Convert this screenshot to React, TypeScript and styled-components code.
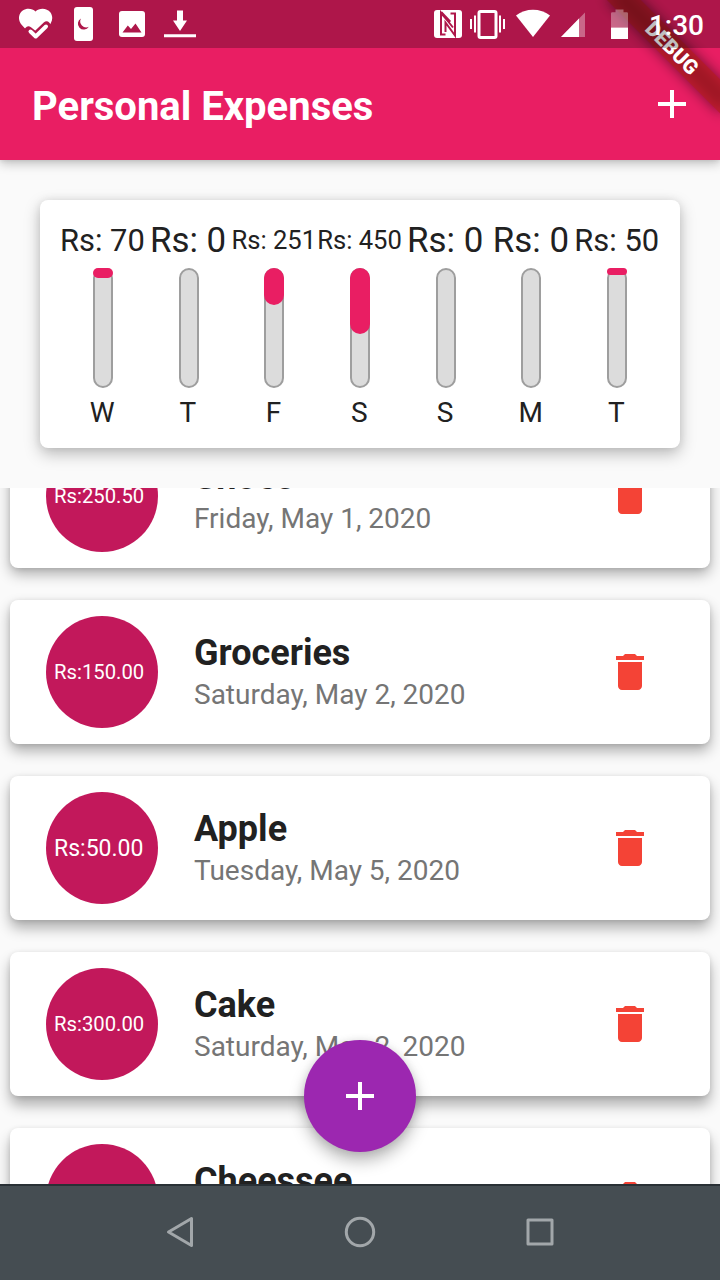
import React from 'react';
import styled, { createGlobalStyle } from 'styled-components';

const GlobalStyle = createGlobalStyle`
  * { box-sizing: border-box; }
  body { margin: 0; background: #fafafa; }
`;

const Screen = styled.div`
  position: relative;
  display: flex;
  flex-direction: column;
  width: 720px;
  height: 1280px;
  overflow: hidden;
  background: #fafafa;
  color: #212121;
  font-family: Roboto, 'Liberation Sans', sans-serif;
`;

const StatusBar = styled.div`
  position: absolute;
  inset: 0 0 auto 0;
  z-index: 3;
  display: flex;
  justify-content: space-between;
  height: 48px;
  padding: 0 16px 0 18px;
  background: rgba(0, 0, 0, 0.25);
  color: #fff;
`;

const StatusGroup = styled.div`
  display: flex;
  align-items: center;
`;

const StatusIcon = styled.span<{ $before?: number }>`
  display: flex;
  margin-left: ${({ $before = 0 }) => $before}px;
`;

const Clock = styled.span`
  margin-left: 21px;
  padding-top: 3px;
  font-size: 28px;
  font-weight: 500;
  line-height: 46px;
`;

const AppBar = styled.header`
  position: relative;
  z-index: 1;
  display: flex;
  flex: none;
  align-items: center;
  justify-content: space-between;
  height: 160px;
  padding: 48px 24px 0 32px;
  background: #e91e63;
  box-shadow: 0 4px 10px rgba(0, 0, 0, 0.22), 0 1px 4px rgba(0, 0, 0, 0.08);
`;

const AppTitle = styled.h1`
  margin: 0;
  padding-top: 4px;
  color: #fff;
  font-size: 40px;
  font-weight: 700;
  line-height: 47px;
`;

const IconButton = styled.button`
  display: flex;
  padding: 0;
  border: 0;
  background: none;
  color: inherit;
`;

const DebugBanner = styled.div`
  position: absolute;
  top: 56px;
  left: 640px;
  z-index: 2;
  width: 160px;
  height: 24px;
  transform: rotate(45deg);
  transform-origin: 80px -56px;
  color: #fff;
  font-size: 20.4px;
  font-weight: 900;
  line-height: 24px;
  text-align: center;

  &::before,
  &::after {
    content: '';
    position: absolute;
    inset: 0;
    z-index: -1;
  }

  &::before {
    background: rgba(0, 0, 0, 0.5);
    filter: blur(7px);
  }

  &::after {
    background: rgba(183, 28, 28, 0.63);
  }
`;

const ChartCard = styled.section`
  display: flex;
  flex: none;
  height: 248px;
  margin: 40px;
  padding: 20px;
  border-radius: 8px;
  background: #fff;
  box-shadow: 0 6px 16px rgba(0, 0, 0, 0.25), 0 0 8px rgba(0, 0, 0, 0.08);
`;

const ChartColumn = styled.div`
  display: flex;
  flex: 1 1 0;
  flex-direction: column;
  align-items: center;
  gap: 8px;
  min-width: 0;
`;

const Amount = styled.div<{ $size: number }>`
  height: 40px;
  padding-right: 1px;
  font-size: ${({ $size }) => $size}px;
  line-height: 41px;
  white-space: nowrap;
`;

const Bar = styled.div`
  position: relative;
  width: 20px;
  height: 120px;
  border: 2px solid #9e9e9e;
  border-radius: 10px;
  background: #dcdcdc;
`;

const BarFill = styled.div`
  position: absolute;
  top: -2px;
  left: -2px;
  width: 20px;
  border-radius: 20px;
  background: #e91e63;
`;

const Day = styled.div`
  height: 32px;
  padding-right: 1.4px;
  font-size: 28px;
  line-height: 33px;
`;

const ListViewport = styled.main`
  flex: none;
  height: 696px;
  overflow: hidden;
`;

const TransactionList = styled.div`
  display: flex;
  flex-direction: column;
  gap: 32px;
  margin-top: -64px;
  padding: 0 10px;
`;

const TransactionCard = styled.article<{ $drop: number }>`
  display: flex;
  flex: none;
  align-items: center;
  height: 144px;
  padding: 0 56px 0 36px;
  border-radius: 8px;
  background: #fff;
  box-shadow: 0 ${({ $drop }) => $drop}px 14px rgba(0, 0, 0, 0.31), 0 1px 5px rgba(0, 0, 0, 0.1);
`;

const Avatar = styled.div<{ $size: number }>`
  display: flex;
  flex: none;
  align-items: center;
  width: 112px;
  height: 112px;
  padding-left: 8px;
  border-radius: 50%;
  background: #c2185b;
  color: #fff;
  font-size: ${({ $size }) => $size}px;
  white-space: nowrap;
`;

const Details = styled.div`
  flex: 1;
  margin-left: 36px;
  padding-top: 4px;
`;

const ItemTitle = styled.h2`
  margin: 0;
  font-size: 36px;
  font-weight: 700;
  line-height: 42px;
`;

const ItemDate = styled.p`
  margin: 0;
  color: #757575;
  font-size: 28px;
  line-height: 42px;
`;

const AddButton = styled.button`
  position: absolute;
  top: 1040px;
  left: 304px;
  display: flex;
  align-items: center;
  justify-content: center;
  width: 112px;
  height: 112px;
  padding: 0;
  border: 0;
  border-radius: 50%;
  background: #9c27b0;
  box-shadow: 0 9px 16px rgba(0, 0, 0, 0.27), 0 1px 8px rgba(0, 0, 0, 0.1);
`;

const NavBar = styled.nav`
  position: relative;
  display: flex;
  flex: none;
  align-items: center;
  justify-content: center;
  gap: 132px;
  height: 96px;
  padding-bottom: 2px;
  border-top: 2px solid #293035;
  background: #454d52;
`;

const PlusIcon = () => (
  <svg width="48" height="48" viewBox="0 0 24 24" fill="#fff">
    <path d="M19 13h-6v6h-2v-6H5v-2h6V5h2v6h6z" />
  </svg>
);

const DeleteIcon = () => (
  <svg width="48" height="48" viewBox="0 0 24 24" fill="#f44336">
    <path d="M6 19c0 1.1.9 2 2 2h8c1.1 0 2-.9 2-2V7H6v12zM19 4h-3.5l-1-1h-5l-1 1H5v2h14V4z" />
  </svg>
);

const HeartCheckIcon = () => (
  <svg width="35" height="48" viewBox="0 0 35 48">
    <path d="M17.500 11.500C13 7 3 8 1.200 16C0 22 4 26 10.500 31.500L18 38.500L28 29C35 23 35.500 17 32.500 12.500C28.500 7.500 21 8 17.500 11.500Z" fill="#fff" />
    <path d="M10.500 30.500L17.500 36L28.500 25.500" fill="none" stroke="#ae174a" strokeWidth="8" strokeLinecap="round" strokeLinejoin="round" />
    <path d="M12.500 31.500L17.700 36.500L28 26.500" fill="none" stroke="#fff" strokeWidth="4" strokeLinecap="round" strokeLinejoin="round" />
  </svg>
);

const NightPhoneIcon = () => (
  <svg width="19" height="48" viewBox="0 0 19 48">
    <rect y="7" width="19" height="34" rx="3" fill="#fff" />
    <path d="M7 18.500A6 6 0 0 0 14.800 26.800A5.900 5.900 0 1 1 7 18.500Z" fill="#ae174a" />
  </svg>
);

const ImageIcon = () => (
  <svg width="26" height="48" viewBox="0 0 26 48">
    <rect y="11" width="26" height="26" rx="3" fill="#fff" />
    <path d="M3.500 32.500L8.800 25.500L12 29L16.500 23.500L22.500 32.500Z" fill="#ae174a" />
  </svg>
);

const DownloadIcon = () => (
  <svg width="32" height="48" viewBox="0 0 32 48" fill="#fff">
    <path d="M13 10.500h6v10h4L16 31L9 20.500h4zM0 34.200h32V37.300H0z" />
  </svg>
);

const NfcIcon = () => (
  <svg width="28" height="48" viewBox="0 0 28 48">
    <rect y="10" width="28" height="28" rx="3" fill="#fff" />
    <g fill="none" stroke="#ae174a" strokeWidth="2">
      <path d="M11.500 34.500H7V12.500L19 27.500" />
      <path d="M16.500 13.500H21V35.500L11.500 22.500V32" />
      <path d="M7 12.500L16 22" strokeWidth="3" />
    </g>
  </svg>
);

const VibrateIcon = () => (
  <svg width="35" height="48" viewBox="0 0 35 48" fill="none" stroke="#fff">
    <rect x="9" y="11.500" width="17" height="26" rx="1.500" strokeWidth="3" />
    <path d="M1 19v10M5 15.500v17M30 15.500v17M34 19v10" strokeWidth="2" />
  </svg>
);

const WifiIcon = () => (
  <svg width="34" height="48" viewBox="0 0 34 48">
    <path d="M17 37L0 15.500C9.500 7.800 24.500 7.800 34 15.500Z" fill="#fff" />
  </svg>
);

const SignalIcon = () => (
  <svg width="24" height="48" viewBox="0 0 24 48" fill="#fff">
    <path d="M0 37L24 12.500V37Z" opacity=".35" />
    <path d="M0 37L18 18.600V37Z" />
  </svg>
);

const BatteryIcon = () => (
  <svg width="17" height="48" viewBox="0 0 17 48" fill="#fff">
    <path d="M0 27.500V13.500Q0 12.300 1.200 12.300H4.500V9.500H12.500V12.300H15.800Q17 12.300 17 13.500V27.500Z" opacity=".35" />
    <path d="M0 27.500H17V39H0z" />
  </svg>
);

const BackIcon = () => (
  <svg width="48" height="48" viewBox="0 0 48 48" fill="none" stroke="#a2a7aa" strokeWidth="3" strokeLinejoin="round">
    <path d="M12.500 24L35.500 10.500V37.500Z" />
  </svg>
);

const HomeIcon = () => (
  <svg width="48" height="48" viewBox="0 0 48 48" fill="none" stroke="#a2a7aa" strokeWidth="3">
    <circle cx="24" cy="24" r="13.700" />
  </svg>
);

const RecentsIcon = () => (
  <svg width="48" height="48" viewBox="0 0 48 48" fill="none" stroke="#a2a7aa" strokeWidth="3" strokeLinejoin="round">
    <rect x="12" y="12" width="24" height="24" />
  </svg>
);

const days = [
  { day: 'W', amount: 70, size: 30.9 },
  { day: 'T', amount: 0, size: 34.9 },
  { day: 'F', amount: 251, size: 25.6 },
  { day: 'S', amount: 450, size: 25.6 },
  { day: 'S', amount: 0, size: 34.9 },
  { day: 'M', amount: 0, size: 34.9 },
  { day: 'T', amount: 50, size: 30.9 },
];

const weekTotal = days.reduce((sum, d) => sum + d.amount, 0);

const transactions = [
  { title: 'Shoes', amount: '250.50', date: 'Friday, May 1, 2020', size: 20.3, drop: 6 },
  { title: 'Groceries', amount: '150.00', date: 'Saturday, May 2, 2020', size: 20.3, drop: 7 },
  { title: 'Apple', amount: '50.00', date: 'Tuesday, May 5, 2020', size: 23, drop: 8 },
  { title: 'Cake', amount: '300.00', date: 'Saturday, May 2, 2020', size: 20.3, drop: 9 },
  { title: 'Cheessee', amount: '100.00', date: 'Sunday, May 3, 2020', size: 20.3, drop: 10 },
];

export default function App() {
  return (
    <>
      <GlobalStyle />
      <Screen>
        <StatusBar>
          <StatusGroup>
            <StatusIcon><HeartCheckIcon /></StatusIcon>
            <StatusIcon $before={21}><NightPhoneIcon /></StatusIcon>
            <StatusIcon $before={26}><ImageIcon /></StatusIcon>
            <StatusIcon $before={19}><DownloadIcon /></StatusIcon>
          </StatusGroup>
          <StatusGroup>
            <StatusIcon><NfcIcon /></StatusIcon>
            <StatusIcon $before={8}><VibrateIcon /></StatusIcon>
            <StatusIcon $before={11}><WifiIcon /></StatusIcon>
            <StatusIcon $before={11}><SignalIcon /></StatusIcon>
            <StatusIcon $before={26}><BatteryIcon /></StatusIcon>
            <Clock>1:30</Clock>
          </StatusGroup>
        </StatusBar>
        <AppBar>
          <AppTitle>Personal Expenses</AppTitle>
          <IconButton aria-label="Add expense">
            <PlusIcon />
          </IconButton>
        </AppBar>
        <DebugBanner>DEBUG</DebugBanner>
        <ChartCard>
          {days.map((d, i) => (
            <ChartColumn key={i}>
              <Amount $size={d.size}>Rs: {d.amount}</Amount>
              <Bar>
                <BarFill style={{ height: (d.amount / weekTotal) * 120 }} />
              </Bar>
              <Day>{d.day}</Day>
            </ChartColumn>
          ))}
        </ChartCard>
        <ListViewport>
          <TransactionList>
            {transactions.map((t) => (
              <TransactionCard key={t.title} $drop={t.drop}>
                <Avatar $size={t.size}>Rs:{t.amount}</Avatar>
                <Details>
                  <ItemTitle>{t.title}</ItemTitle>
                  <ItemDate>{t.date}</ItemDate>
                </Details>
                <IconButton aria-label="Delete">
                  <DeleteIcon />
                </IconButton>
              </TransactionCard>
            ))}
          </TransactionList>
        </ListViewport>
        <AddButton aria-label="Add expense">
          <PlusIcon />
        </AddButton>
        <NavBar>
          <BackIcon />
          <HomeIcon />
          <RecentsIcon />
        </NavBar>
      </Screen>
    </>
  );
}
